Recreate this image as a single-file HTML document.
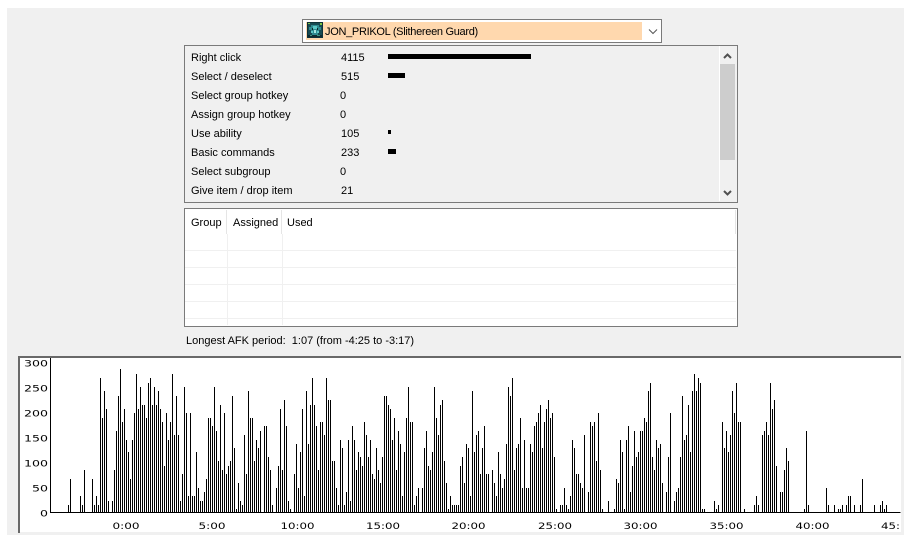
<!DOCTYPE html>
<html><head><meta charset="utf-8"><style>
html,body{margin:0;padding:0;width:904px;height:535px;overflow:hidden;background:#fff}
body{position:relative;font-family:"Liberation Sans",sans-serif;font-size:11px;color:#000}
.a{position:absolute}
.t{position:absolute;white-space:nowrap;line-height:14px;height:14px}
.box{position:absolute;box-sizing:border-box;border:1px solid #7a7a7a}
.b{position:absolute;background:#000;left:388px}
.h{position:absolute;background:#f0f0f0;left:185px;width:551px;height:1px}
</style></head><body>
<div class="a" style="left:7px;top:8px;width:897px;height:527px;background:#f0f0f0"></div>

<div class="box" style="left:302px;top:19px;width:360px;height:24px;background:#fff;border:1px solid #7a7a7a"></div>
<div class="a" style="left:306px;top:22px;width:336px;height:18px;background:#ffd8ae"></div>
<svg class="a" style="left:307px;top:22px" width="16" height="16" viewBox="0 0 16 16" shape-rendering="crispEdges">
<rect width="16" height="16" fill="#0f3138"/><rect x="1" y="1" width="14" height="14" fill="#174a52"/>
<path d="M4 3h8v2h2v3h-2v3h-1v2H5v-2H4V8H2V5h2z" fill="#2e8a90"/><path d="M6 4h4v3H6zM4 9h2v2H4zM10 9h2v2h-2z" fill="#5cc8c6"/><path d="M5 6h1v2H5zM10 6h1v2h-1z" fill="#0b262c"/><path d="M7 8h2v3H7z" fill="#a6e6e0"/>
<path d="M1 1h2v1H1zM13 1h2v2h-2z" fill="#7cc443"/><path d="M1 13h14v2H1z" fill="#0d2a30"/><path d="M3 13h2v1H3zM10 13h3v1h-3z" fill="#3a8f7a"/></svg>
<div class="t" style="left:325px;top:25px;letter-spacing:-.3px">JON_PRIKOL (Slithereen Guard)</div>
<svg class="a" style="left:648px;top:28px" width="10" height="7"><path d="M1 1.500l4 4 4-4" fill="none" stroke="#555" stroke-width="1"/></svg>

<div class="box" style="left:184px;top:45px;width:554px;height:158px"></div>
<div class="a" style="left:719px;top:46px;width:1px;height:155px;background:#fff"></div>
<div class="a" style="left:720px;top:64px;width:15px;height:96px;background:#cdcdcd"></div>
<svg class="a" style="left:723px;top:52px" width="9" height="8"><path d="M1 6l3.500-3.500L8 6" fill="none" stroke="#505050" stroke-width="2"/></svg>
<svg class="a" style="left:723px;top:189px" width="9" height="8"><path d="M1 2l3.500 3.500L8 2" fill="none" stroke="#505050" stroke-width="2"/></svg>

<div class="t" style="left:191px;top:51px">Right click</div><div class="t" style="left:341px;top:51px">4115</div>
<div class="t" style="left:191px;top:70px">Select / deselect</div><div class="t" style="left:341px;top:70px">515</div>
<div class="t" style="left:191px;top:89px">Select group hotkey</div><div class="t" style="left:340px;top:89px">0</div>
<div class="t" style="left:191px;top:108px">Assign group hotkey</div><div class="t" style="left:340px;top:108px">0</div>
<div class="t" style="left:191px;top:127px">Use ability</div><div class="t" style="left:341px;top:127px">105</div>
<div class="t" style="left:191px;top:146px">Basic commands</div><div class="t" style="left:341px;top:146px">233</div>
<div class="t" style="left:191px;top:165px">Select subgroup</div><div class="t" style="left:340px;top:165px">0</div>
<div class="t" style="left:191px;top:184px">Give item / drop item</div><div class="t" style="left:341px;top:184px">21</div>
<div class="b" style="top:54px;width:143px;height:5px"></div>
<div class="b" style="top:73px;width:17px;height:5px"></div>
<div class="b" style="top:130px;width:3px;height:4px"></div>
<div class="b" style="top:149px;width:8px;height:5px"></div>

<div class="box" style="left:184px;top:208px;width:554px;height:119px;background:#fff"></div>
<div class="h" style="top:250px"></div><div class="h" style="top:267px"></div><div class="h" style="top:284px"></div><div class="h" style="top:301px"></div><div class="h" style="top:318px"></div>
<div class="a" style="left:227px;top:234px;width:1px;height:91px;background:#f0f0f0"></div>
<div class="a" style="left:282px;top:234px;width:1px;height:91px;background:#f0f0f0"></div>
<div class="a" style="left:226px;top:210px;width:1px;height:24px;background:#e5e5e5"></div>
<div class="a" style="left:281px;top:210px;width:1px;height:24px;background:#e5e5e5"></div>
<div class="a" style="left:735px;top:210px;width:1px;height:24px;background:#e5e5e5"></div>
<div class="t" style="left:191px;top:216px">Group</div>
<div class="t" style="left:233px;top:216px">Assigned</div>
<div class="t" style="left:287px;top:216px">Used</div>
<div class="t" style="left:186px;top:334px">Longest AFK period:&nbsp; 1:07 (from -4:25 to -3:17)</div>

<svg class="a" style="left:0;top:0" width="904" height="535" font-family="'DejaVu Sans',sans-serif" font-size="9" fill="#000">
<rect x="19" y="357" width="882" height="175" fill="#fff"/>
<rect x="18" y="356" width="883" height="2" fill="#696969"/>
<rect x="18" y="356" width="2" height="177" fill="#696969"/>
<path d="M50 358v155M50 512.500h850" stroke="#000" stroke-width="1" fill="none" shape-rendering="crispEdges" transform="translate(.5,0)"/>
<path transform="translate(.5,0)" stroke="#000" stroke-width="1" fill="none" shape-rendering="crispEdges" d="M68 513v-8M70 513v-34M80 513v-17M82 513v-8M84 513v-43M92 513v-34M94 513v-8M96 513v-17M98 513v-8M100 513v-135M102 513v-95M104 513v-122M106 513v-104M108 513v-12M112 513v-12M114 513v-43M116 513v-82M118 513v-117M120 513v-144M122 513v-91M124 513v-104M126 513v-73M128 513v-61M130 513v-34M132 513v-73M134 513v-100M136 513v-139M138 513v-104M140 513v-126M142 513v-108M144 513v-108M146 513v-95M148 513v-130M150 513v-135M152 513v-108M154 513v-126M156 513v-108M158 513v-122M160 513v-104M162 513v-91M164 513v-47M166 513v-100M168 513v-73M170 513v-91M172 513v-139M174 513v-78M176 513v-117M178 513v-78M180 513v-12M182 513v-39M184 513v-126M186 513v-100M188 513v-17M190 513v-100M192 513v-17M194 513v-17M196 513v-61M198 513v-25M200 513v-12M202 513v-12M204 513v-21M206 513v-34M208 513v-95M210 513v-95M212 513v-87M214 513v-126M216 513v-82M218 513v-52M220 513v-108M222 513v-43M224 513v-100M226 513v-39M228 513v-47M230 513v-52M232 513v-117M234 513v-65M236 513v-4M238 513v-30M240 513v-12M242 513v-8M244 513v-78M246 513v-39M248 513v-122M250 513v-95M252 513v-95M254 513v-52M256 513v-73M258 513v-65M260 513v-82M264 513v-87M266 513v-87M268 513v-56M270 513v-43M272 513v-8M276 513v-25M278 513v-47M280 513v-104M282 513v-43M284 513v-113M286 513v-87M288 513v-12M290 513v-4M294 513v-39M296 513v-69M298 513v-25M300 513v-61M302 513v-104M304 513v-17M306 513v-122M308 513v-69M310 513v-108M312 513v-135M314 513v-108M316 513v-87M318 513v-43M320 513v-91M322 513v-91M324 513v-78M326 513v-135M328 513v-113M330 513v-113M332 513v-52M334 513v-52M336 513v-25M338 513v-8M340 513v-73M342 513v-65M344 513v-8M346 513v-21M348 513v-73M350 513v-12M352 513v-87M354 513v-73M356 513v-43M358 513v-61M360 513v-56M362 513v-47M364 513v-91M366 513v-78M368 513v-56M370 513v-73M372 513v-39M374 513v-34M376 513v-65M378 513v-43M380 513v-30M382 513v-56M384 513v-117M386 513v-117M388 513v-108M390 513v-104M392 513v-73M394 513v-95M396 513v-43M398 513v-82M400 513v-69M402 513v-17M404 513v-61M406 513v-95M408 513v-126M410 513v-91M412 513v-91M414 513v-8M416 513v-17M418 513v-25M422 513v-25M424 513v-65M426 513v-82M428 513v-47M430 513v-43M432 513v-61M434 513v-126M436 513v-95M438 513v-78M440 513v-108M442 513v-113M444 513v-52M446 513v-30M448 513v-4M450 513v-17M452 513v-8M454 513v-8M456 513v-8M458 513v-8M460 513v-47M462 513v-56M464 513v-30M466 513v-69M468 513v-65M470 513v-17M472 513v-122M474 513v-61M476 513v-78M478 513v-82M480 513v-39M482 513v-65M484 513v-87M486 513v-39M488 513v-39M492 513v-43M494 513v-30M496 513v-17M498 513v-61M500 513v-39M502 513v-25M504 513v-34M506 513v-69M508 513v-126M510 513v-117M512 513v-135M514 513v-43M516 513v-65M518 513v-69M520 513v-95M522 513v-25M524 513v-73M526 513v-25M528 513v-25M530 513v-69M532 513v-61M534 513v-87M536 513v-91M538 513v-100M540 513v-108M542 513v-65M544 513v-91M546 513v-104M548 513v-113M550 513v-95M552 513v-100M554 513v-56M556 513v-4M560 513v-8M562 513v-8M564 513v-25M566 513v-8M568 513v-4M570 513v-17M572 513v-73M574 513v-65M576 513v-39M578 513v-39M580 513v-30M582 513v-25M584 513v-78M588 513v-21M590 513v-91M592 513v-87M594 513v-91M596 513v-52M598 513v-100M600 513v-43M602 513v-4M608 513v-12M614 513v-4M616 513v-34M618 513v-30M620 513v-73M622 513v-61M624 513v-4M626 513v-73M628 513v-87M630 513v-21M632 513v-47M634 513v-82M636 513v-56M638 513v-61M640 513v-82M642 513v-82M644 513v-95M646 513v-91M648 513v-122M650 513v-130M652 513v-56M654 513v-43M656 513v-73M658 513v-65M660 513v-69M662 513v-30M666 513v-21M668 513v-56M670 513v-100M674 513v-12M676 513v-21M678 513v-25M680 513v-56M682 513v-117M684 513v-73M686 513v-78M688 513v-108M690 513v-61M692 513v-122M694 513v-139M696 513v-122M698 513v-135M700 513v-130M702 513v-4M704 513v-4M714 513v-12M716 513v-4M718 513v-8M722 513v-91M724 513v-65M726 513v-82M728 513v-61M730 513v-78M732 513v-122M734 513v-100M736 513v-130M738 513v-91M740 513v-91M744 513v-4M754 513v-8M756 513v-17M758 513v-8M762 513v-78M764 513v-82M766 513v-91M768 513v-78M770 513v-130M772 513v-104M774 513v-113M776 513v-47M780 513v-21M782 513v-21M784 513v-43M786 513v-65M788 513v-52M804 513v-4M806 513v-82M808 513v-8M826 513v-25M828 513v-8M834 513v-8M838 513v-4M840 513v-4M842 513v-8M846 513v-8M848 513v-17M850 513v-17M854 513v-8M860 513v-8M862 513v-34M874 513v-8M880 513v-8M882 513v-12M884 513v-4M886 513v-8"/>
<g text-anchor="end">
<text x="48" y="366.500" textLength="24" lengthAdjust="spacingAndGlyphs">300</text>
<text x="48" y="391.500" textLength="24" lengthAdjust="spacingAndGlyphs">250</text>
<text x="48" y="416.500" textLength="24" lengthAdjust="spacingAndGlyphs">200</text>
<text x="48" y="441.500" textLength="24" lengthAdjust="spacingAndGlyphs">150</text>
<text x="48" y="466.500" textLength="24" lengthAdjust="spacingAndGlyphs">100</text>
<text x="48" y="491.500" textLength="16" lengthAdjust="spacingAndGlyphs">50</text>
<text x="48" y="516.500" textLength="8" lengthAdjust="spacingAndGlyphs">0</text>
</g>
<text x="112.500" y="529" textLength="27" lengthAdjust="spacingAndGlyphs">0:00</text>
<text x="198.500" y="529" textLength="27" lengthAdjust="spacingAndGlyphs">5:00</text>
<text x="280.500" y="529" textLength="34" lengthAdjust="spacingAndGlyphs">10:00</text>
<text x="366" y="529" textLength="34" lengthAdjust="spacingAndGlyphs">15:00</text>
<text x="451.500" y="529" textLength="34" lengthAdjust="spacingAndGlyphs">20:00</text>
<text x="538" y="529" textLength="34" lengthAdjust="spacingAndGlyphs">25:00</text>
<text x="623.500" y="529" textLength="34" lengthAdjust="spacingAndGlyphs">30:00</text>
<text x="709.500" y="529" textLength="34" lengthAdjust="spacingAndGlyphs">35:00</text>
<text x="795.500" y="529" textLength="34" lengthAdjust="spacingAndGlyphs">40:00</text>
<text x="881" y="529" textLength="19" lengthAdjust="spacingAndGlyphs">45:</text>
</svg>
</body></html>
